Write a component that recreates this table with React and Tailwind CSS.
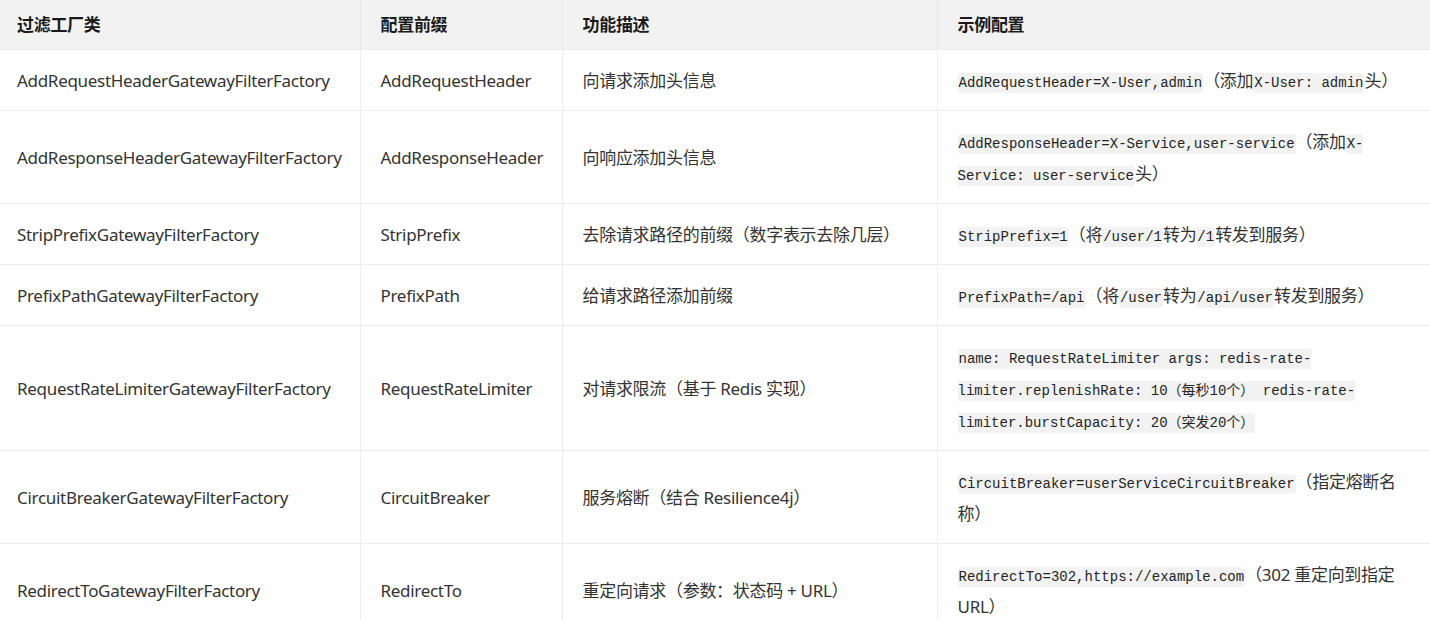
import React from "react";

const C = ({ children }) => (
  <code className="rounded-[4px] bg-[#f2f2f2] px-[1px] py-[2px] align-baseline font-['Liberation_Mono','Noto_Sans_CJK_SC',monospace] text-[14px] leading-[1] tracking-normal text-[#242424]">
    {children}
  </code>
);

const rows = [
  ["AddRequestHeaderGatewayFilterFactory", "AddRequestHeader", "向请求添加头信息",
    <><C>AddRequestHeader=X-User,admin</C>（添加<C>X-User: admin</C>头）</>],
  ["AddResponseHeaderGatewayFilterFactory", "AddResponseHeader", "向响应添加头信息",
    <><C>AddResponseHeader=X-Service,user-service</C>（添加<C>X-Service: user-service</C>头）</>],
  ["StripPrefixGatewayFilterFactory", "StripPrefix", "去除请求路径的前缀（数字表示去除几层）",
    <><C>StripPrefix=1</C>（将<C>/user/1</C>转为<C>/1</C>转发到服务）</>],
  ["PrefixPathGatewayFilterFactory", "PrefixPath", "给请求路径添加前缀",
    <><C>PrefixPath=/api</C>（将<C>/user</C>转为<C>/api/user</C>转发到服务）</>],
  ["RequestRateLimiterGatewayFilterFactory", "RequestRateLimiter", "对请求限流（基于 Redis 实现）",
    <><C>name: RequestRateLimiter args: redis-rate-limiter.replenishRate: 10（每秒10个） redis-rate-limiter.burstCapacity: 20（突发20个）</C></>],
  ["CircuitBreakerGatewayFilterFactory", "CircuitBreaker", "服务熔断（结合 Resilience4j）",
    <><C>CircuitBreaker=userServiceCircuitBreaker</C>（指定熔断名称）</>],
  ["RedirectToGatewayFilterFactory", "RedirectTo", "重定向请求（参数：状态码 + URL）",
    <><C>RedirectTo=302,https://example.com</C>（302 重定向到指定URL）</>],
];

export default function App() {
  return (
    <div className="w-[1430px] h-[620px] overflow-hidden bg-white font-['Noto_Sans','Noto_Sans_CJK_SC',sans-serif] text-[17px] tracking-[-0.3px] text-[#333]">
      <table className="w-[1430px] table-fixed border-collapse">
        <colgroup>
          <col className="w-[360px]" />
          <col className="w-[202px]" />
          <col className="w-[375px]" />
          <col className="w-[493px]" />
        </colgroup>
        <thead>
          <tr className="h-[49px] bg-[#f2f2f2] text-left font-bold text-[#1a1a1a]">
            <th className="pl-[17px] pr-5 border-r border-[#e6e6e6]">过滤工厂类</th>
            <th className="px-5 border-r border-[#e6e6e6]">配置前缀</th>
            <th className="px-5 border-r border-[#e6e6e6]">功能描述</th>
            <th className="px-5">示例配置</th>
          </tr>
        </thead>
        <tbody>
          {rows.map((r, i) => (
            <tr key={i} className="border-t border-[#ececec] leading-[32px]">
              <td className="pl-[17px] pr-3 pt-[15px] pb-[13px] border-r border-[#ececec]">{r[0]}</td>
              <td className="px-5 pt-[15px] pb-[13px] border-r border-[#ececec]">{r[1]}</td>
              <td className="px-5 pt-[15px] pb-[13px] border-r border-[#ececec]">{r[2]}</td>
              <td className="pl-5 pr-4 pt-[15px] pb-[13px]">{r[3]}</td>
            </tr>
          ))}
        </tbody>
      </table>
    </div>
  );
}
